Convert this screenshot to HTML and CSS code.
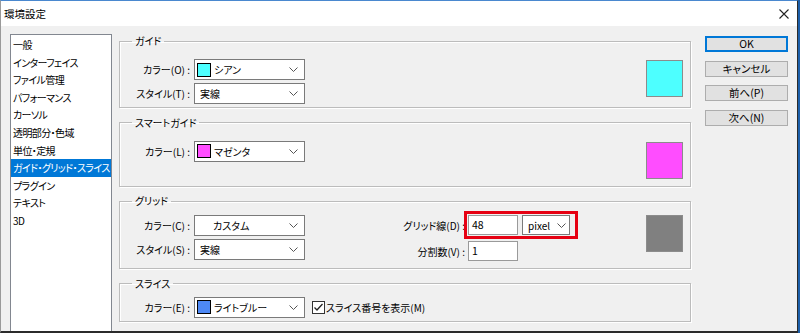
FILE: index.html
```html
<!DOCTYPE html>
<html>
<head>
  <meta charset="utf-8">
  <title>環境設定</title>
  <link rel="stylesheet" href="styles.css">
</head>
<body>
  <div class="window">
    <div class="titlebar">
      <span class="title">環境設定</span>
      <svg class="close" width="10" height="10" viewBox="0 0 10 10">
        <path d="M0.5 0.5 L9.5 9.5 M9.5 0.5 L0.5 9.5" stroke="#222" stroke-width="1.1" fill="none"/>
      </svg>
    </div>
    <div class="content">
      <ul class="category-list">
        <li>一般</li>
        <li>インターフェイス</li>
        <li>ファイル管理</li>
        <li>パフォーマンス</li>
        <li>カーソル</li>
        <li>透明部分・色域</li>
        <li>単位・定規</li>
        <li class="selected">ガイド・グリッド・スライス</li>
        <li>プラグイン</li>
        <li>テキスト</li>
        <li>3D</li>
      </ul>

      <div class="groups">
        <fieldset class="group group-guide">
          <legend>ガイド</legend>
          <div class="group-body">
            <div class="fields">
              <label>カラー(O) :</label>
              <div class="select"><span class="chip chip-cyan"></span><span>シアン</span><svg class="chevron" width="9" height="5" viewBox="0 0 9 5"><polyline points="0.5,0.5 4.5,4.5 8.5,0.5" fill="none" stroke="#555"/></svg></div>
              <label>スタイル(T) :</label>
              <div class="select"><span class="plain">実線</span><svg class="chevron" width="9" height="5" viewBox="0 0 9 5"><polyline points="0.5,0.5 4.5,4.5 8.5,0.5" fill="none" stroke="#555"/></svg></div>
            </div>
            <div class="swatch swatch-cyan"></div>
          </div>
        </fieldset>

        <fieldset class="group group-smart">
          <legend>スマートガイド</legend>
          <div class="group-body">
            <div class="fields">
              <label>カラー(L) :</label>
              <div class="select"><span class="chip chip-magenta"></span><span>マゼンタ</span><svg class="chevron" width="9" height="5" viewBox="0 0 9 5"><polyline points="0.5,0.5 4.5,4.5 8.5,0.5" fill="none" stroke="#555"/></svg></div>
            </div>
            <div class="swatch swatch-magenta"></div>
          </div>
        </fieldset>

        <fieldset class="group group-grid">
          <legend>グリッド</legend>
          <div class="group-body">
            <div class="fields">
              <label>カラー(C) :</label>
              <div class="select"><span class="custom">カスタム</span><svg class="chevron" width="9" height="5" viewBox="0 0 9 5"><polyline points="0.5,0.5 4.5,4.5 8.5,0.5" fill="none" stroke="#555"/></svg></div>
              <label>スタイル(S) :</label>
              <div class="select"><span class="plain">実線</span><svg class="chevron" width="9" height="5" viewBox="0 0 9 5"><polyline points="0.5,0.5 4.5,4.5 8.5,0.5" fill="none" stroke="#555"/></svg></div>
            </div>
            <div class="fields fields-extra">
              <label>グリッド線(D) :</label>
              <div class="highlight">
                <div class="input">48</div>
                <div class="select select-unit"><span class="plain">pixel</span><svg class="chevron" width="9" height="5" viewBox="0 0 9 5"><polyline points="0.5,0.5 4.5,4.5 8.5,0.5" fill="none" stroke="#555"/></svg></div>
              </div>
              <label>分割数(V) :</label>
              <div class="input">1</div>
            </div>
            <div class="swatch swatch-gray"></div>
          </div>
        </fieldset>

        <fieldset class="group group-slice">
          <legend>スライス</legend>
          <div class="group-body">
            <div class="fields">
              <label>カラー(E) :</label>
              <div class="select"><span class="chip chip-blue"></span><span>ライトブルー</span><svg class="chevron" width="9" height="5" viewBox="0 0 9 5"><polyline points="0.5,0.5 4.5,4.5 8.5,0.5" fill="none" stroke="#555"/></svg></div>
            </div>
            <div class="checkbox">
              <svg width="13" height="13" viewBox="0 0 13 13">
                <rect x="0.5" y="0.5" width="12" height="12" fill="#fff" stroke="#333"/>
                <polyline points="2.5,6.5 5,9 10.5,3" fill="none" stroke="#222" stroke-width="1.3"/>
              </svg>
              <span>スライス番号を表示(M)</span>
            </div>
          </div>
        </fieldset>
      </div>

      <div class="buttons">
        <button class="btn btn-default">OK</button>
        <button class="btn">キャンセル</button>
        <button class="btn">前へ(P)</button>
        <button class="btn">次へ(N)</button>
      </div>
    </div>
  </div>
</body>
</html>
```

FILE: styles.css
```css
    html, body {
      margin: 0;
      height: 333px;
      overflow: hidden;
    }
    body {
      background-color: #1d5fa9;
      color: #000;
      font-family: "Noto Sans CJK JP", "Noto Sans", sans-serif;
      font-size: 10px;
      font-feature-settings: "palt";
    }
    .window {
      width: 798px;
      height: 333px;
      box-sizing: border-box;
      display: flex;
      flex-direction: column;
      background-color: #f0f0f0;
      border-top: 1px solid #4a88cf;
      border-left: 1px solid #9a9a9a;
      border-right: 1px solid #2b2b2b;
      border-bottom: 2px solid #2b2b2b;
    }
    .titlebar {
      height: 25px;
      flex: none;
      display: flex;
      align-items: center;
      justify-content: space-between;
      padding: 0 8px 0 3px;
      background-color: #fff;
    }
    .title {
      font-size: 10.5px;
      line-height: 14px;
    }
    .content {
      flex: 1;
      min-height: 0;
      display: flex;
      padding: 8px 9px 0 9px;
    }

    /* category list */
    .category-list {
      width: 102px;
      box-sizing: border-box;
      flex: none;
      margin: 0;
      padding: 1px 0 0;
      list-style: none;
      overflow: hidden;
      background-color: #fff;
      border: 1px solid #828790;
      border-bottom: none;
    }
    .category-list li {
      height: 17.6px;
      line-height: 17.6px;
      padding-left: 2px;
      letter-spacing: -0.6px;
      white-space: nowrap;
    }
    .category-list li.selected {
      background-color: #0078d7;
      color: #fff;
    }

    /* groups */
    .groups {
      width: 572px;
      flex: none;
      margin-left: 7px;
      display: flex;
      flex-direction: column;
      gap: 7.5px;
    }
    .group {
      margin: 0;
      padding: 0 7px 3px 0;
      min-width: 0;
      border: 1px solid #bcbcbc;
      box-shadow: inset 1px 1px 0 #fff, 1px 1px 0 #fff;
    }
    .group legend {
      margin-left: 12px;
      padding: 0 3px;
      line-height: 14px;
    }
    .group-guide { padding-top: 11px; }
    .group-smart { padding-top: 11px; padding-bottom: 7px; }
    .group-grid { padding-top: 7px; padding-bottom: 7px; }
    .group-slice { padding-top: 6px; padding-bottom: 3px; }
    .group-body {
      display: flex;
      align-items: flex-start;
    }
    .fields {
      display: grid;
      grid-template-columns: 70px 111px;
      column-gap: 4px;
      row-gap: 3px;
      align-items: center;
    }
    .fields label {
      text-align: right;
      white-space: nowrap;
    }
    .fields-extra {
      grid-template-columns: 80px auto;
      column-gap: 3px;
      row-gap: 6px;
      margin-left: 80px;
      justify-items: start;
    }
    .fields-extra label {
      justify-self: end;
    }

    /* controls */
    .select {
      height: 21px;
      box-sizing: border-box;
      display: flex;
      align-items: center;
      padding: 0 6px 0 2px;
      background-color: #fff;
      border: 1px solid #7a7a7a;
      white-space: nowrap;
    }
    .select .chevron {
      margin-left: auto;
    }
    .select .plain {
      padding-left: 3px;
    }
    .select .custom {
      padding-left: 16px;
    }
    .select-unit {
      width: 48px;
      height: 20px;
      padding-left: 2px;
      padding-right: 3px;
    }
    .chip {
      width: 12px;
      height: 12px;
      margin-right: 3px;
      border: 1px solid #000;
    }
    .chip-cyan { background-color: #4dffff; }
    .chip-magenta { background-color: #ff4dff; }
    .chip-blue { background-color: #4d88f5; }
    .input {
      width: 50px;
      height: 20px;
      box-sizing: border-box;
      padding-left: 3px;
      font-size: 10.5px;
      line-height: 18px;
      background-color: #fff;
      border: 1px solid #9a9a9a;
    }
    .highlight {
      display: flex;
      gap: 4px;
      padding-right: 4px;
      outline: 3px solid #e60012;
      outline-offset: 1px;
    }
    .swatch {
      width: 37px;
      height: 37px;
      box-sizing: border-box;
      margin-left: auto;
      margin-top: 1px;
      border: 1px solid #8c8c8c;
    }
    .swatch-cyan { background-color: #4dffff; }
    .swatch-magenta { background-color: #ff4dff; }
    .swatch-gray { background-color: #808080; margin-top: 0; }
    .checkbox {
      display: flex;
      align-items: center;
      gap: 1px;
      height: 21px;
      margin-left: 7px;
      white-space: nowrap;
    }

    /* buttons */
    .buttons {
      width: 83px;
      flex: none;
      margin-left: 14px;
      padding-top: 2px;
      display: flex;
      flex-direction: column;
      gap: 8.5px;
    }
    .btn {
      height: 16px;
      padding: 0;
      box-sizing: border-box;
      background-color: #e1e1e1;
      border: 1px solid #adadad;
      font-family: inherit;
      font-size: 10.5px;
      font-feature-settings: "palt";
      line-height: 14px;
      color: #000;
    }
    .btn-default {
      border-color: #0078d7;
      box-shadow: inset 0 0 0 1px #0078d7;
    }
```
